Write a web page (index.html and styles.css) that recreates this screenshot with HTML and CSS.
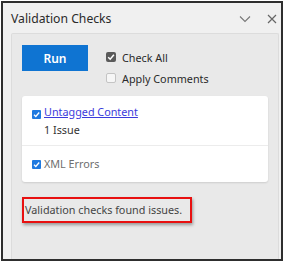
FILE: index.html
```html
<!DOCTYPE html>
<html>
<head>
<meta charset="utf-8">
<link rel="stylesheet" href="styles.css">
</head>
<body>
<div class="frame">
  <div class="titlebar">
    <span class="title">Validation Checks</span>
    <div class="title-icons">
      <svg class="chev" width="12" height="8" viewBox="0 0 12 8"><path d="M1 1.5 L6 6.5 L11 1.5" fill="none" stroke="#777" stroke-width="1.1"/></svg>
      <svg class="close" width="10" height="10" viewBox="0 0 10 10"><path d="M1 1 L9 9 M9 1 L1 9" fill="none" stroke="#666" stroke-width="1.2"/></svg>
    </div>
  </div>
  <div class="panel">
    <div class="controls">
      <button class="run">Run</button>
      <div class="opts">
        <label class="opt"><span class="cb cb-checked"><svg width="10" height="10" viewBox="0 0 10 10"><path d="M2.2 5.2 L4.2 7.2 L7.9 2.8" fill="none" stroke="#fff" stroke-width="1.5"/></svg></span>Check All</label>
        <label class="opt"><span class="cb cb-empty"></span>Apply Comments</label>
      </div>
    </div>
    <div class="card">
      <div class="item">
        <span class="bcb"><svg width="9" height="9" viewBox="0 0 9 9"><path d="M2 4.7 L3.8 6.5 L7.2 2.5" fill="none" stroke="#fff" stroke-width="1.3"/></svg></span>
        <div class="item-text">
          <a class="link">Untagged Content</a>
          <div class="sub">1 Issue</div>
        </div>
      </div>
      <div class="item item2">
        <span class="bcb"><svg width="9" height="9" viewBox="0 0 9 9"><path d="M2 4.7 L3.8 6.5 L7.2 2.5" fill="none" stroke="#fff" stroke-width="1.3"/></svg></span>
        <span class="muted">XML Errors</span>
      </div>
    </div>
    <div class="status">Validation checks found issues.</div>
  </div>
</div>
</body>
</html>
```
FILE: styles.css
```css
html, body {
  margin: 0;
  padding: 0;
  background: #fff;
}
body {
  font-family: "Noto Sans", "Open Sans", sans-serif;
  color: #333;
}
.frame {
  margin: 1px;
  width: 278px;
  height: 256px;
  border: 2px solid #2e2e2e;
  background: #f0f0f0;
  display: flex;
  flex-direction: column;
}
.titlebar {
  height: 30px;
  display: flex;
  align-items: center;
  justify-content: space-between;
  padding-left: 8px;
  padding-right: 4px;
  flex: none;
}
.title {
  font-size: 12.2px;
  color: #2a2a2a;
}
.title-icons {
  display: flex;
  align-items: center;
  gap: 16px;
  margin-top: 1px;
}
.panel {
  flex: 1;
  margin-left: 8px;
  margin-right: 2px;
  border: 1px solid #dcdcdc;
  border-bottom: none;
  border-radius: 2px 2px 0 0;
  background: #e9e9e9;
  padding: 11px 9px 0 10px;
  display: flex;
  flex-direction: column;
}
.controls {
  display: flex;
  gap: 18px;
}
.run {
  width: 66px;
  height: 26px;
  border: none;
  background: #0f74d2;
  color: #fff;
  font-family: "Noto Sans", sans-serif;
  font-size: 12px;
  font-weight: 600;
  padding: 0;
}
.opts {
  display: flex;
  flex-direction: column;
  gap: 5px;
  margin-top: 4px;
}
.opt {
  display: flex;
  align-items: center;
  gap: 6px;
  font-size: 10.8px;
  color: #2a2a2a;
  height: 16px;
}
.cb {
  width: 10px;
  height: 10px;
  border-radius: 2px;
  box-sizing: border-box;
  display: flex;
  flex: none;
}
.cb-checked {
  background: #5a5a5a;
}
.cb-empty {
  background: #f6f6f6;
  border: 1px solid #c4c4c4;
}
.card {
  margin-top: 10px;
  width: 246px;
  background: #fff;
  border-radius: 3px;
  box-shadow: 0 1px 2px rgba(0,0,0,0.12);
}
.item {
  display: flex;
  align-items: flex-start;
  gap: 3px;
  padding: 6px 10px 7px 10px;
  border-bottom: 1px solid #ececec;
}
.item2 {
  border-bottom: none;
  align-items: center;
  padding: 9px 10px 10px 10px;
}
.bcb {
  width: 9px;
  height: 9px;
  background: #1f7ae0;
  border-radius: 1px;
  flex: none;
  display: flex;
  margin-top: 8px;
}
.item2 .bcb {
  margin-top: 1px;
}
.item-text {
  display: flex;
  flex-direction: column;
}
.link {
  font-size: 10.8px;
  color: #3b3bdc;
  text-decoration: underline;
  line-height: 19px;
}
.sub {
  font-size: 10.8px;
  color: #333;
  line-height: 17px;
}
.muted {
  font-size: 10.8px;
  color: #6e6e6e;
  line-height: 17px;
}
.status {
  margin-top: 15px;
  align-self: flex-start;
  border: 2px solid #e81010;
  box-shadow: 1px 2px 3px rgba(0,0,0,0.35);
  padding: 2px 8px 3px 1px;
  font-size: 10.8px;
  color: #444;
  line-height: 17px;
}
```
